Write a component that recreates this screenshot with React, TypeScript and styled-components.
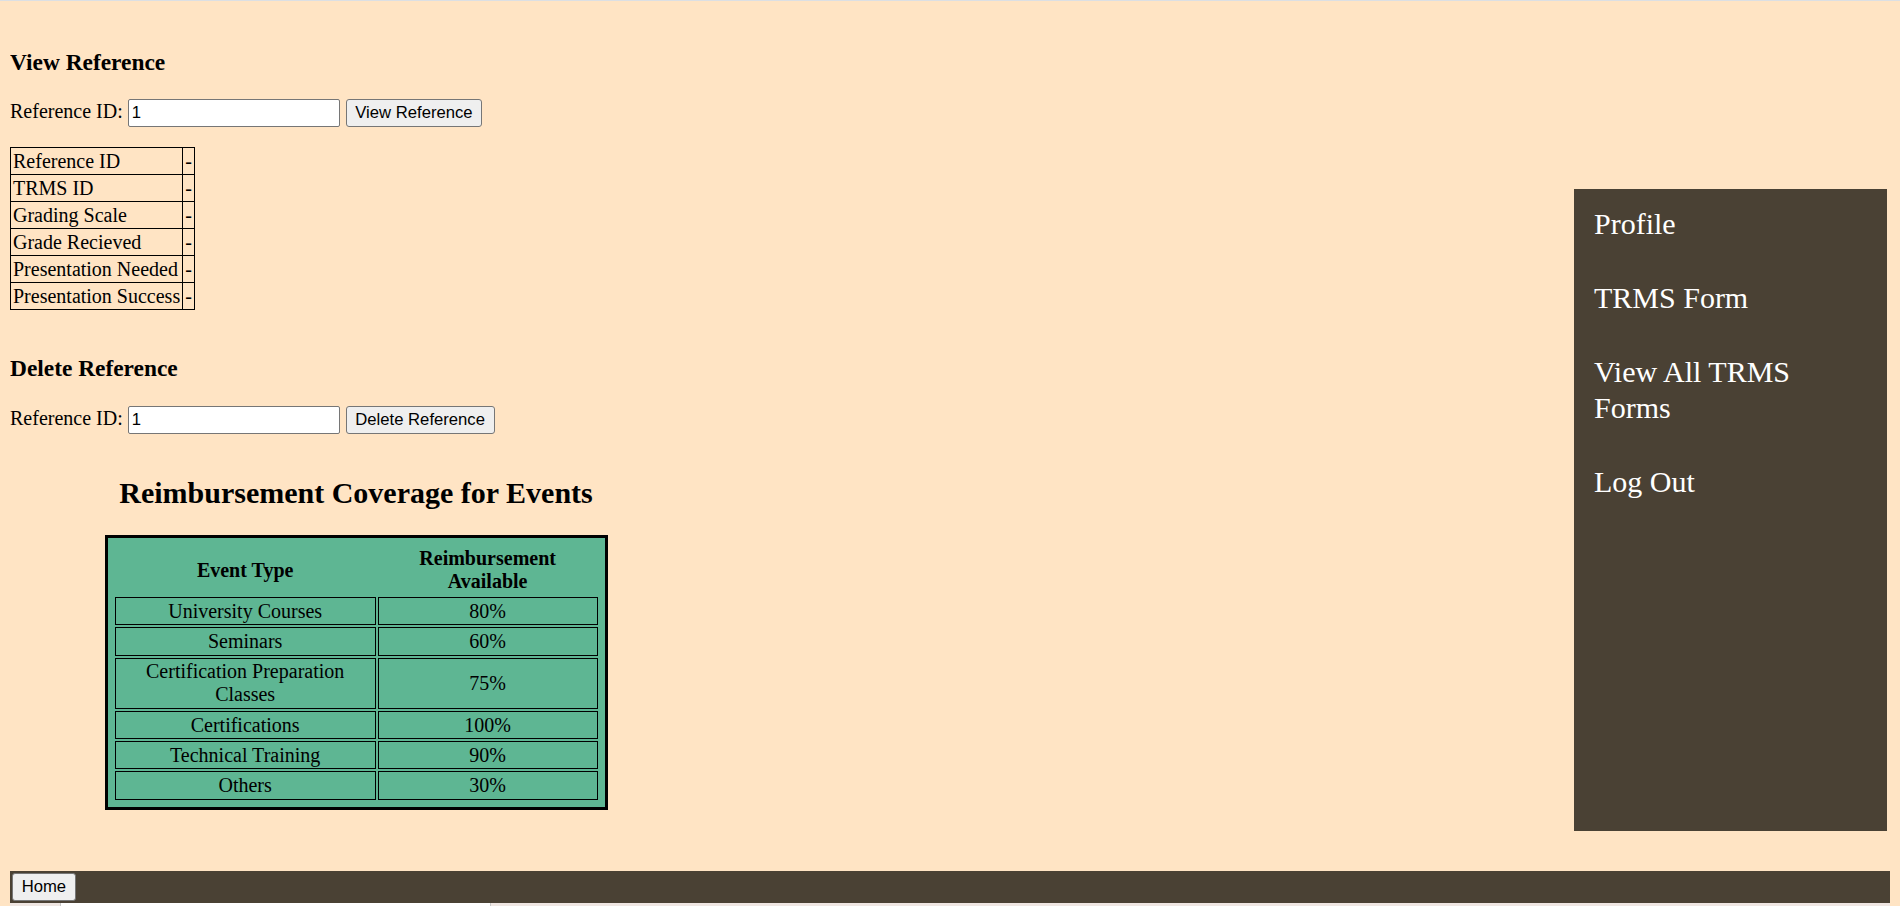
import React from "react";
import styled, { createGlobalStyle } from "styled-components";

const GlobalStyle = createGlobalStyle`
  html {
    border-top: 1px solid #dcdfe3;
    background: #ffe4c4;
    overflow: hidden;
  }
  body {
    margin: 10px;
    font-family: "Liberation Serif", "Times New Roman", serif;
    font-size: 20px;
    color: #000;
    background: #ffe4c4;
    overflow: hidden;
  }
`;

const Layout = styled.div`
  display: flex;
  align-items: flex-start;
`;

const Main = styled.main`
  flex: 1;
  min-width: 0;
  display: flex;
  flex-direction: column;
  align-items: flex-start;
`;

const SectionTitle = styled.h3<{ $top: number }>`
  margin: ${(p) => p.$top}px 0 0;
  font-size: 23.4px;
  line-height: 27px;
  font-weight: bold;
`;

const FormRow = styled.form<{ $top: number }>`
  margin: ${(p) => p.$top}px 0 0;
  display: flex;
  align-items: baseline;
  column-gap: 5px;
`;

const Label = styled.label`
  font-size: 20px;
  line-height: 23px;
`;

const TextInput = styled.input`
  box-sizing: border-box;
  width: 212px;
  height: 28px;
  padding: 1px 3px;
  border: 1px solid #767676;
  border-radius: 2px;
  background: #fff;
  font-family: "Liberation Sans", Arial, sans-serif;
  font-size: 16.67px;
  color: #000;
`;

const ControlButton = styled.button`
  box-sizing: border-box;
  height: 28px;
  padding: 0 8.6px;
  margin-left: 1px;
  border: 1px solid #767676;
  border-radius: 3px;
  background: #efefef;
  font-family: "Liberation Sans", Arial, sans-serif;
  font-size: 16.67px;
  color: #000;
`;

const InfoTable = styled.table`
  margin-top: 20px;
  border-collapse: collapse;
`;

const InfoCell = styled.td`
  border: 1px solid #000;
  padding: 1px 2px;
  font-size: 20px;
  line-height: 24px;
`;

const Coverage = styled.section`
  width: 692px;
  display: flex;
  flex-direction: column;
  align-items: center;
`;

const CoverageTitle = styled.h2`
  margin: 42px 0 0;
  font-size: 30px;
  line-height: 34.5px;
  font-weight: bold;
`;

const CoverageTable = styled.table`
  margin-top: 25.4px;
  width: 503px;
  box-sizing: border-box;
  table-layout: fixed;
  border: 3px solid #000;
  padding: 5px;
  border-spacing: 2.5px;
  background: #5eb693;
`;

const HeadCell = styled.th<{ $w: number }>`
  box-sizing: border-box;
  width: ${(p) => p.$w}px;
  padding: 2px 1px;
  font-size: 20px;
  line-height: 23px;
  font-weight: bold;
  text-align: center;
`;

const DataCell = styled.td`
  border: 1px solid #000;
  padding: 1.25px 1px;
  font-size: 20px;
  line-height: 23.6px;
  text-align: center;
`;

const Sidebar = styled.nav`
  flex-shrink: 0;
  box-sizing: border-box;
  width: 313px;
  height: 642px;
  margin: 178px 3px 0 0;
  padding: 17px 20px;
  background: #4a4134;
  display: flex;
  flex-direction: column;
  gap: 38px;
`;

const NavLink = styled.a`
  color: #fff;
  text-decoration: none;
  font-size: 30px;
  line-height: 36px;
`;

const Footer = styled.footer`
  margin: 40px -10px 0 0;
  padding: 2px;
  background: #4a4134;
  display: flex;
`;

const HomeButton = styled(ControlButton)`
  height: 27.5px;
  margin-left: 0;
  padding: 0 8.7px;
`;

const BelowStrip = styled.div`
  margin: 0 -10px;
  height: 30px;
  background: #efe6e2;
  display: flex;
`;

const StripBox = styled.div`
  margin-left: 60px;
  width: 429px;
  background: #fff;
  border-left: 1px solid #c8c8c8;
  border-right: 1px solid #c8c8c8;
`;

const infoRows = [
  "Reference ID",
  "TRMS ID",
  "Grading Scale",
  "Grade Recieved",
  "Presentation Needed",
  "Presentation Success",
];

const coverageRows: [string, string][] = [
  ["University Courses", "80%"],
  ["Seminars", "60%"],
  ["Certification Preparation Classes", "75%"],
  ["Certifications", "100%"],
  ["Technical Training", "90%"],
  ["Others", "30%"],
];

export default function App() {
  return (
    <>
      <GlobalStyle />
      <Layout>
        <Main>
          <SectionTitle $top={38}>View Reference</SectionTitle>
          <FormRow $top={23} onSubmit={(e) => e.preventDefault()}>
            <Label htmlFor="viewId">Reference ID:</Label>
            <TextInput id="viewId" type="text" defaultValue="1" />
            <ControlButton type="button">View Reference</ControlButton>
          </FormRow>
          <InfoTable>
            <tbody>
              {infoRows.map((r) => (
                <tr key={r}>
                  <InfoCell>{r}</InfoCell>
                  <InfoCell>-</InfoCell>
                </tr>
              ))}
            </tbody>
          </InfoTable>
          <SectionTitle $top={45}>Delete Reference</SectionTitle>
          <FormRow $top={23.5} onSubmit={(e) => e.preventDefault()}>
            <Label htmlFor="deleteId">Reference ID:</Label>
            <TextInput id="deleteId" type="text" defaultValue="1" />
            <ControlButton type="button">Delete Reference</ControlButton>
          </FormRow>
          <Coverage>
            <CoverageTitle>Reimbursement Coverage for Events</CoverageTitle>
            <CoverageTable>
              <thead>
                <tr>
                  <HeadCell $w={260.5}>Event Type</HeadCell>
                  <HeadCell $w={219}>Reimbursement Available</HeadCell>
                </tr>
              </thead>
              <tbody>
                {coverageRows.map(([t, v]) => (
                  <tr key={t}>
                    <DataCell>{t}</DataCell>
                    <DataCell>{v}</DataCell>
                  </tr>
                ))}
              </tbody>
            </CoverageTable>
          </Coverage>
        </Main>
        <Sidebar>
          <NavLink href="#">Profile</NavLink>
          <NavLink href="#">TRMS Form</NavLink>
          <NavLink href="#">View All TRMS Forms</NavLink>
          <NavLink href="#">Log Out</NavLink>
        </Sidebar>
      </Layout>
      <Footer>
        <HomeButton type="button">Home</HomeButton>
      </Footer>
      <BelowStrip>
        <StripBox />
      </BelowStrip>
    </>
  );
}
